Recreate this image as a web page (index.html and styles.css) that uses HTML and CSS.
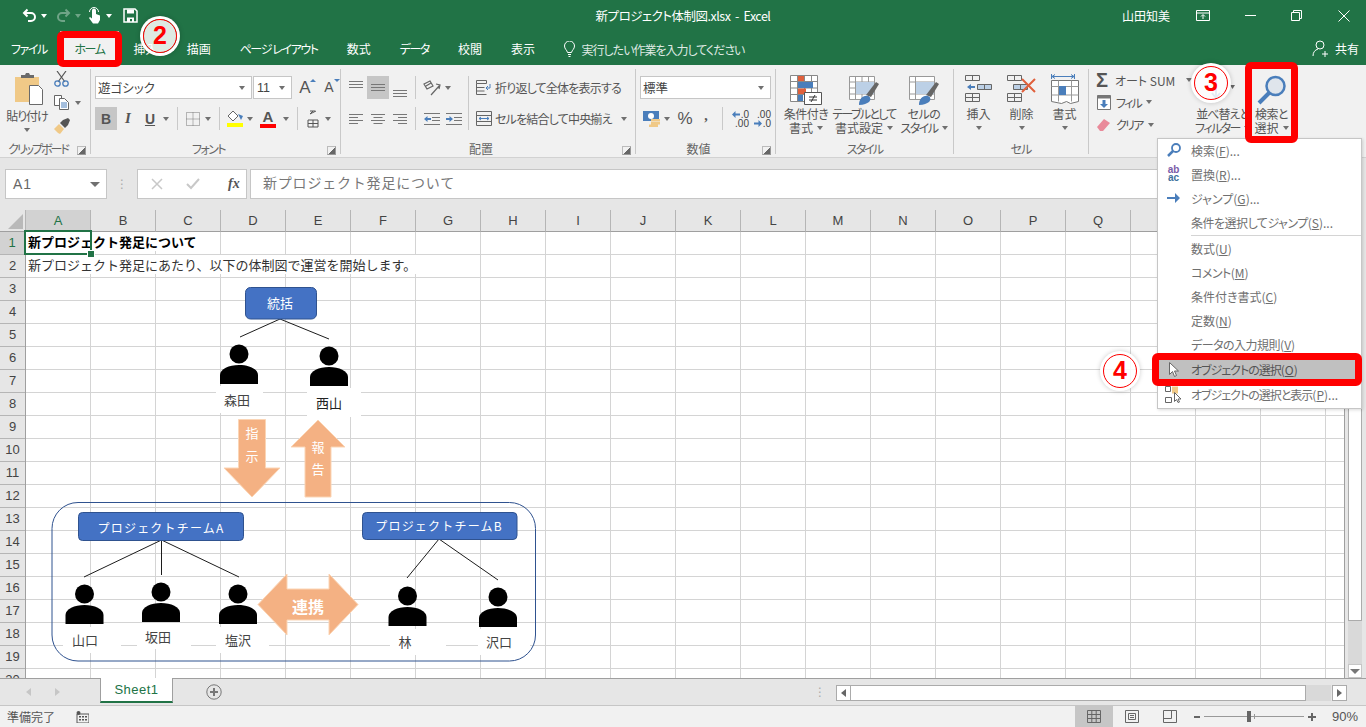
FILE: index.html
```html
<!DOCTYPE html>
<html lang="ja">
<head>
    <meta charset="UTF-8">
    <title>新プロジェクト体制図.xlsx - Excel</title>
    <link rel="stylesheet" href="styles.css">
</head>
<body>
<div class="app">

    <!-- title bar -->
    <div class="titlebar">
        <div class="qat">
            <svg width="15" height="15" viewBox="0 0 15 15"><path d="M5.5 1.5 2 5l3.5 3.5M2.5 5H9a4 4 0 0 1 0 8H6" fill="none" stroke="#fff" stroke-width="2"/></svg>
            <i class="caret white"></i>
            <svg class="dim" width="15" height="15" viewBox="0 0 15 15"><path d="M9.5 1.5 13 5 9.5 8.5M12.5 5H6a4 4 0 0 0 0 8h3" fill="none" stroke="#fff" stroke-width="2"/></svg>
            <i class="caret white dim"></i>
            <svg width="15" height="17" viewBox="0 0 15 17"><path d="M5 8V3.5a2 2 0 0 1 4 0V7l4 1.5V13l-2 3.5H6L2 11l1-1 2 1.500z" fill="#fff"/><path d="M2.5 5a4.500 4.500 0 0 1 9 0" fill="none" stroke="#fff"/></svg>
            <i class="caret white"></i>
            <svg width="15" height="15" viewBox="0 0 15 15"><path d="M1 1h11l2 2v11H1z" fill="none" stroke="#fff" stroke-width="1.5"/><path d="M4 1.500h7v4H4zM4 9.500h7V14H9v-3H7v3H4z" fill="#fff"/></svg>
        </div>
        <div class="doc-title">新プロジェクト体制図.xlsx&nbsp; - &nbsp;Excel</div>
        <div class="winbtns">
            <span class="user">山田知美</span>
            <svg class="ctl-ribbon" width="14" height="11" viewBox="0 0 14 11"><path d="M.5.5h13v10H.5zM.5 3h13M7 9V5M5 6.5l2-2 2 2" fill="none" stroke="#fff"/></svg>
            <svg class="ctl-min" width="11" height="11" viewBox="0 0 11 11"><path d="M0 5.5h11" stroke="#fff"/></svg>
            <svg class="ctl-max" width="11" height="11" viewBox="0 0 11 11"><path d="M.5 2.5h8v8h-8zM2.5 2.5v-2h8v8h-2" fill="none" stroke="#fff"/></svg>
            <svg class="ctl-close" width="12" height="12" viewBox="0 0 12 12"><path d="M.5.5l11 11M11.5.5l-11 11" stroke="#fff"/></svg>
        </div>
    </div>

    <!-- tabs -->
    <div class="tabs">
        <span class="tab kana">ファイル</span>
        <span class="tab kana active">ホーム</span>
        <span class="tab">挿入</span>
        <span class="tab">描画</span>
        <span class="tab kana">ページ レイアウト</span>
        <span class="tab">数式</span>
        <span class="tab kana">データ</span>
        <span class="tab">校閲</span>
        <span class="tab">表示</span>
        <span class="tell">
            <svg width="11" height="16" viewBox="0 0 11 16"><path d="M3.5 11.5C3 9 .5 8 .5 5a5 5 0 0 1 10 0c0 3-2.500 4-3 6.500zM4 13.5h3M4.5 15.5h2" fill="none" stroke="#fff"/></svg>
            <span class="k1">実行したい作業を入力してください</span>
        </span>
        <span class="share">
            <svg width="18" height="17" viewBox="0 0 18 17"><circle cx="8" cy="5" r="4" fill="none" stroke="#fff"/><path d="M1 16c0-4 2-6 5-7M13 11v6M10 14h6" fill="none" stroke="#fff"/></svg>
            共有
        </span>
    </div>

    <!-- ribbon -->
    <div class="ribbon">

        <div class="group g-clip">
            <div class="group-body">
                <div class="big paste">
                    <svg width="29" height="32" viewBox="0 0 29 32"><path d="M0 4h24v25H0z" fill="#f0c987"/><path d="M6 5V2h4l1-2h3l1 2h4v3z" fill="#6a6a6a"/><path d="M14.5 12.5h9l4 4v15h-13z" fill="#fff" stroke="#6a6a6a"/></svg>
                    <span class="big-label k1">貼り付け</span>
                    <span class="big-label"><i class="caret"></i></span>
                </div>
                <div class="clip-tools">
                    <svg width="15" height="16" viewBox="0 0 15 16"><path d="M3 0l8 11M12 0 4 11" stroke="#555" stroke-width="1.2"/><circle cx="3.5" cy="12.5" r="2.7" fill="none" stroke="#4a7ebb" stroke-width="1.3"/><circle cx="11.5" cy="12.5" r="2.7" fill="none" stroke="#4a7ebb" stroke-width="1.3"/></svg>
                    <div class="copy-line">
                        <svg width="15" height="15" viewBox="0 0 15 15"><path d="M.5.5h7v10h-7z" fill="#fff" stroke="#666"/><path d="M5.5 3.5h5l4 4v7h-9z" fill="#fff" stroke="#666"/><path d="M7 8h6M7 10h6M7 12h6" stroke="#4a7ebb"/></svg>
                        <i class="caret"></i>
                    </div>
                    <svg width="16" height="16" viewBox="0 0 16 16"><path d="M0 11l5-5 5 5-4 5-2-1z" fill="#f0c987"/><path d="M6 5l3-3 5-2 2 2-2 5-3 3z" fill="#555"/></svg>
                </div>
            </div>
            <div class="group-label"><span class="k2">クリップボード</span><i class="launcher"></i></div>
        </div>

        <div class="group g-font">
            <div class="group-body col">
                <div class="tool-row">
                    <div class="combo font-name">遊ゴシック<i class="caret"></i></div>
                    <div class="combo font-size">11<i class="caret"></i></div>
                    <span class="resize r-up">A<i class="tri blue-up"></i></span>
                    <span class="resize r-down">A<i class="tri blue-down"></i></span>
                </div>
                <div class="tool-row">
                    <span class="tool w22 on bold-b">B</span>
                    <span class="tool w22 ital-i">I</span>
                    <span class="tool w22 under-u">U</span>
                    <span class="tool w10"><i class="caret"></i></span>
                    <i class="vsep"></i>
                    <span class="tool w20">
                        <svg width="14" height="14" viewBox="0 0 14 14"><path d="M.5.5h13v13H.5z" fill="none" stroke="#777" stroke-dasharray="1 1"/><path d="M7 .5v13M.5 7h13" stroke="#777" stroke-dasharray="1 1"/></svg>
                    </span>
                    <span class="tool w10"><i class="caret"></i></span>
                    <i class="vsep"></i>
                    <span class="tool w20">
                        <svg width="17" height="16" viewBox="0 0 17 16"><path d="M6 0 1 5l5 5 5-5z" fill="#fff" stroke="#666"/><path d="M11 3l5 2-2 4z" fill="#4a7ebb"/><path d="M0 12h16v4H0z" fill="#ff0"/></svg>
                    </span>
                    <span class="tool w10"><i class="caret"></i></span>
                    <span class="tool w26 font-color">A</span>
                    <span class="tool w10"><i class="caret"></i></span>
                    <i class="vsep"></i>
                    <span class="tool w20">
                        <svg width="14" height="18" viewBox="0 0 14 18"><path d="M4 4l6-3M4 1h5M7 1l-3 3M2 10h10v7H2zM2 13.500h10M7 10v7" fill="none" stroke="#555"/></svg>
                    </span>
                    <span class="tool w10"><i class="caret"></i></span>
                </div>
            </div>
            <div class="group-label"><span class="k15">フォント</span><i class="launcher"></i></div>
        </div>

        <div class="group g-align">
            <div class="group-body">
                <div class="col align-left">
                    <div class="tool-row">
                        <span class="tool w22 va-top"><svg width="14" height="7" viewBox="0 0 14 7"><path d="M0 .5h14M0 3.5h14M0 6.5h14" stroke="#777"/></svg></span>
                        <span class="tool w22 on"><svg width="14" height="7" viewBox="0 0 14 7"><path d="M0 .5h14M0 3.5h14M0 6.5h14" stroke="#777"/></svg></span>
                        <span class="tool w22 va-bot"><svg width="14" height="7" viewBox="0 0 14 7"><path d="M0 .5h14M0 3.5h14M0 6.5h14" stroke="#777"/></svg></span>
                        <i class="vsep"></i>
                        <span class="tool w22">
                            <svg width="18" height="16" viewBox="0 0 18 16"><path d="M1 4l6-3 3 5-6 3zM3 6l5-3M8 15 17 5M13 4l4 1-1 4" fill="none" stroke="#666" stroke-width="1.2"/></svg>
                        </span>
                        <span class="tool w10"><i class="caret"></i></span>
                    </div>
                    <div class="tool-row">
                        <span class="tool w22"><svg width="14" height="10" viewBox="0 0 14 10"><path d="M0 .5h14M0 3.5h9M0 6.5h14M0 9.5h9" stroke="#777"/></svg></span>
                        <span class="tool w22"><svg width="14" height="10" viewBox="0 0 14 10"><path d="M0 .5h14M2.5 3.5h9M0 6.5h14M2.5 9.5h9" stroke="#777"/></svg></span>
                        <span class="tool w22"><svg width="14" height="10" viewBox="0 0 14 10"><path d="M0 .5h14M5 3.5h9M0 6.5h14M5 9.5h9" stroke="#777"/></svg></span>
                        <i class="vsep"></i>
                        <span class="tool w22"><svg width="16" height="12" viewBox="0 0 16 12"><path d="M0 .5h16M8 4.5h8M8 7.5h8M0 11.5h16" stroke="#777"/><path d="M0 6l3.5-3v2H7v2H3.5v2z" fill="#4a7ebb"/></svg></span>
                        <span class="tool w22"><svg width="16" height="12" viewBox="0 0 16 12"><path d="M0 .5h16M8 4.5h8M8 7.5h8M0 11.5h16" stroke="#777"/><path d="M7 6 3.5 3v2H0v2h3.5v2z" fill="#4a7ebb"/></svg></span>
                    </div>
                </div>
                <i class="vsep tall"></i>
                <div class="col align-right">
                    <div class="tool-row text-tool">
                        <svg width="16" height="15" viewBox="0 0 16 15"><path d="M.5.5h10v3H.5zM.5 3.5v11h10M.5 7.5h8M.5 11h8" fill="none" stroke="#666"/><path d="M10 8h4V4M10 8l2-2M10 8l2 2" fill="none" stroke="#4a7ebb"/></svg>
                        <span class="k08">折り返して全体を表示する</span>
                    </div>
                    <div class="tool-row text-tool">
                        <svg width="16" height="15" viewBox="0 0 16 15"><path d="M.5.5h15v14H.5zM.5 4.5h15M.5 10.5h15" fill="none" stroke="#666"/><path d="M3 7.5h10M3 7.5l2-1.500M3 7.5l2 1.500M13 7.5 11 6M13 7.5 11 9" fill="none" stroke="#4a7ebb"/></svg>
                        <span class="k08">セルを結合して中央揃え</span>
                        <i class="caret merge-caret"></i>
                    </div>
                </div>
            </div>
            <div class="group-label"><span>配置</span><i class="launcher"></i></div>
        </div>

        <div class="group g-num">
            <div class="group-body col">
                <div class="tool-row">
                    <div class="combo num-format">標準<i class="caret"></i></div>
                </div>
                <div class="tool-row">
                    <span class="tool w22">
                        <svg width="17" height="16" viewBox="0 0 17 16"><path d="M0 0h16v10H0z" fill="#4a7ebb"/><circle cx="8" cy="5" r="3" fill="#fff"/><path d="M8 8h9v2.5H8zM8 11h9v2.5H8zM6 13.500h9V16H6z" fill="#f0c987"/></svg>
                    </span>
                    <span class="tool w10"><i class="caret"></i></span>
                    <span class="tool w26 pct">%</span>
                    <span class="tool w16 comma">,</span>
                    <i class="vsep num-sep"></i>
                    <span class="dec">
                        <span class="dec-line"><svg width="8" height="7" viewBox="0 0 8 7"><path d="M0 3.5 3.5 0v2.500H8v2H3.5V7z" fill="#4a7ebb"/></svg>.0</span>
                        <span class="dec-line">.00</span>
                    </span>
                    <span class="dec">
                        <span class="dec-line">.00</span>
                        <span class="dec-line"><svg width="8" height="7" viewBox="0 0 8 7"><path d="M8 3.5 4.500 0v2.500H0v2h4.500V7z" fill="#4a7ebb"/></svg>.0</span>
                    </span>
                </div>
            </div>
            <div class="group-label"><span>数値</span><i class="launcher"></i></div>
        </div>

        <div class="group g-style">
            <div class="group-body">
                <div class="big b-cond">
                    <svg width="32" height="30" viewBox="0 0 32 30"><path d="M.5.5h27v26H.5zM7.5.5v26M14.5.5v26M21.5.5v26M.5 6.500h27M.5 13h27M.5 19.500h27" fill="#fff" stroke="#888"/><path d="M8 1h6v5H8zM8 13.500h8v5.500H8z" fill="#e0603c"/><path d="M8 7h15v6H8zM8 20h5v6H8z" fill="#4a7ebb"/><path d="M14.5 17.5h17v12h-17z" fill="#fff" stroke="#555"/><path d="M19 22h8M19 25h8M25 20l-4 7" stroke="#333" fill="none"/></svg>
                    <span class="big-label k05">条件付き</span>
                    <span class="big-label">書式<i class="caret"></i></span>
                </div>
                <div class="big b-table">
                    <svg width="30" height="30" viewBox="0 0 30 30"><path d="M.5 1.5h25v23H.5zM6.500 1.500v23M13 1.500v23M19.500 1.500v23M.5 7h25M.5 13h25M.5 19h25" fill="#fff" stroke="#999"/><path d="M7 7h18v12H7z" fill="#bcd0e6"/><path d="M17 20 27 7l3 2-8 13z" fill="#666"/><path d="M10 30c0-6 4-10 9-9 3 1 3 4 1 6-2 1-5 3-10 3z" fill="#4a7ebb"/></svg>
                    <span class="big-label k17">テーブルとして</span>
                    <span class="big-label">書式設定<i class="caret"></i></span>
                </div>
                <div class="big b-cell">
                    <svg width="30" height="30" viewBox="0 0 30 30"><path d="M.5 1.5h25v23H.5zM.5 7h25M.5 19h25M6.500 1.500v23" fill="#fff" stroke="#999"/><path d="M7 7h18v12H7z" fill="#bcd0e6"/><path d="M17 20 27 7l3 2-8 13z" fill="#666"/><path d="M10 30c0-6 4-10 9-9 3 1 3 4 1 6-2 1-5 3-10 3z" fill="#4a7ebb"/></svg>
                    <span class="big-label k05">セルの</span>
                    <span class="big-label"><span class="k15">スタイル</span><i class="caret"></i></span>
                </div>
            </div>
            <div class="group-label solo"><span class="k2">スタイル</span></div>
        </div>

        <div class="group g-cells">
            <div class="group-body">
                <div class="big b-cellbtn">
                    <svg width="27" height="30" viewBox="0 0 27 30"><path d="M.5.5h14v5H.5zM7.5.5v5M.5 18.500h14v8H.5zM.5 22.500h14M7.500 18.500v8" fill="none" stroke="#666"/><path d="M12.500 9.500h14v5h-14zM19.500 9.500v5" fill="#bcd0e6" stroke="#666"/><path d="M2 12l4-3v2h4v2H6v2z" fill="#4a7ebb"/></svg>
                    <span class="big-label">挿入</span>
                    <span class="big-label"><i class="caret"></i></span>
                </div>
                <div class="big b-cellbtn">
                    <svg width="29" height="30" viewBox="0 0 29 30"><path d="M.5.5h14v5H.5zM7.5.5v5M.5 18.500h14v8H.5zM.5 22.500h14M7.500 18.500v8" fill="none" stroke="#666"/><path d="M6.500 9.500h14v5h-14zM13.500 9.500v5" fill="#bcd0e6" stroke="#666"/><path d="M15 4l13 13M28 4 15 17" stroke="#e0603c" stroke-width="2"/></svg>
                    <span class="big-label">削除</span>
                    <span class="big-label"><i class="caret"></i></span>
                </div>
                <div class="big b-cellbtn">
                    <svg width="28" height="32" viewBox="0 0 28 32"><path d="M.5 0v5M23.500 0v5M1 2.500h22M1 2.500l3-2M1 2.500l3 2M23 2.500l-3-2M23 2.500l-3 2" fill="none" stroke="#4a7ebb"/><path d="M.5 6.500h27v21l-8 2-4-2-5 2-10-2z" fill="#fff" stroke="#777"/><path d="M7.500 6.500v21M20.500 6.500v21M.5 12.500h27M.5 21h27" stroke="#999"/><path d="M8 12h7v9H8z" fill="#4a7ebb"/></svg>
                    <span class="big-label">書式</span>
                    <span class="big-label"><i class="caret"></i></span>
                </div>
            </div>
            <div class="group-label solo"><span class="k1">セル</span></div>
        </div>

        <div class="group g-edit">
            <div class="group-body">
                <div class="edit-tools">
                    <div class="edit-line">
                        <span class="sigma">Σ</span><span class="sum-text">オート SUM</span><i class="caret sum-caret"></i>
                    </div>
                    <div class="edit-line">
                        <svg width="14" height="15" viewBox="0 0 14 15"><path d="M.5.5h13v14H.5z" fill="#fff" stroke="#777"/><path d="M.5.5h13v3H.5z" fill="#777"/><path d="M5.500 5h3v4H11l-4 4-4-4h2.500z" fill="#4a7ebb"/></svg>
                        <span class="k17">フィル</span><i class="caret"></i>
                    </div>
                    <div class="edit-line">
                        <svg width="14" height="13" viewBox="0 0 14 13"><path d="M0 9l7-8 6 4-7 8H3z" fill="#e98a9a"/></svg>
                        <span class="k17">クリア</span><i class="caret"></i>
                    </div>
                </div>
                <div class="big b-sort">
                    <svg width="30" height="30" viewBox="0 0 30 30"><path d="M8 4v18M4 18l4 5 4-5" fill="none" stroke="#4a7ebb" stroke-width="2"/><path d="M22 10l5 0-2.500 4z" fill="#666"/></svg>
                    <span class="big-label k1">並べ替えと</span>
                    <span class="big-label"><span class="k15">フィルター</span><i class="caret"></i></span>
                </div>
                <div class="big b-find">
                    <svg width="30" height="30" viewBox="0 0 30 30"><circle cx="18.500" cy="11" r="9" fill="#dfe5ec" stroke="#4a7ebb" stroke-width="2.500"/><path d="M12 18 2 28" stroke="#4a7ebb" stroke-width="4"/></svg>
                    <span class="big-label k05">検索と</span>
                    <span class="big-label">選択<i class="caret"></i></span>
                </div>
            </div>
        </div>
    </div>

    <!-- formula bar -->
    <div class="formula-bar">
        <div class="name-box">A1<i class="caret big-caret"></i></div>
        <span class="grip">⋮</span>
        <div class="fx-btns">
            <svg width="12" height="12" viewBox="0 0 12 12"><path d="M1 1l10 10M11 1 1 11" stroke="#c8c8c8" stroke-width="1.5"/></svg>
            <svg width="14" height="12" viewBox="0 0 14 12"><path d="M1 6l4 4 8-9" fill="none" stroke="#c8c8c8" stroke-width="2"/></svg>
            <span class="fx">fx</span>
        </div>
        <div class="formula-input">新プロジェクト発足について</div>
    </div>

    <!-- sheet -->
    <div class="sheet">
        <div class="grid">
            <div class="col-heads">
                <div class="corner"><i></i></div>
                <div class="ch sel">A</div><div class="ch">B</div><div class="ch">C</div><div class="ch">D</div><div class="ch">E</div><div class="ch">F</div><div class="ch">G</div><div class="ch">H</div><div class="ch">I</div><div class="ch">J</div><div class="ch">K</div><div class="ch">L</div><div class="ch">M</div><div class="ch">N</div><div class="ch">O</div><div class="ch">P</div><div class="ch">Q</div><div class="ch">R</div><div class="ch">S</div><div class="ch">T</div><div class="ch">U</div>
            </div>
            <div class="grid-body">
                <div class="row-heads">
                    <div class="rh sel">1</div><div class="rh">2</div><div class="rh">3</div><div class="rh">4</div><div class="rh">5</div><div class="rh">6</div><div class="rh">7</div><div class="rh">8</div><div class="rh">9</div><div class="rh">10</div><div class="rh">11</div><div class="rh">12</div><div class="rh">13</div><div class="rh">14</div><div class="rh">15</div><div class="rh">16</div><div class="rh">17</div><div class="rh">18</div><div class="rh">19</div><div class="rh">20</div>
                </div>
                <div class="cells">
                    <div class="cell-row"><span class="cell-text strong">新プロジェクト発足について</span></div>
                    <div class="cell-row"><span class="cell-text">新プロジェクト発足にあたり、以下の体制図で運営を開始します。</span></div>
                    <div class="active-cell"></div>
                </div>
            </div>
        </div>

        <!-- diagram, drawn in page coordinates -->
        <svg class="diagram" width="1345" height="468" viewBox="0 210 1345 468">
            <g class="mask">
                <rect x="216" y="386" width="47" height="27"/>
                <rect x="307" y="388" width="54" height="29"/>
                <rect x="63" y="627" width="58" height="26"/>
                <rect x="137" y="623" width="54" height="26"/>
                <rect x="216" y="627" width="53" height="26"/>
                <rect x="390" y="629" width="56" height="26"/>
                <rect x="478" y="629" width="52" height="26"/>
            </g>

            <rect class="frame" x="52" y="502.5" width="483.5" height="158.5" rx="26"/>

            <g class="wires">
                <path d="M280 319 240 337M280 319l49 20"/>
                <path d="M161.5 540 84 577M161.5 540v35M161.5 540 239 577"/>
                <path d="M439 539 407 578M439 539l59 41"/>
            </g>

            <rect class="node" x="245.5" y="287.5" width="71" height="31.5" rx="5"/>
            <rect class="node" x="78.5" y="512.5" width="165" height="28" rx="4"/>
            <rect class="node" x="362.5" y="512.5" width="154.5" height="27" rx="4"/>
            <text class="on-node" x="280" y="308">統括</text>
            <text class="on-node spaced" x="161" y="533">プロジェクトチームA</text>
            <text class="on-node spaced" x="439" y="531">プロジェクトチームB</text>

            <defs>
                <g id="person">
                    <circle cx="0" cy="0" r="9.5"/>
                    <path d="M-19 30v-9c0-6 9-10 19-10s19 4 19 10v9z"/>
                </g>
            </defs>
            <use href="#person" x="239" y="354"/>
            <use href="#person" x="329" y="356"/>
            <use href="#person" x="84.5" y="594"/>
            <use href="#person" x="161" y="592"/>
            <use href="#person" x="238" y="594"/>
            <use href="#person" x="407.5" y="596"/>
            <use href="#person" x="498" y="597"/>

            <text class="who" x="237" y="405">森田</text>
            <text class="who dark" x="329" y="408">西山</text>
            <text class="who" x="85" y="645">山口</text>
            <text class="who" x="158" y="642">坂田</text>
            <text class="who" x="238" y="645">塩沢</text>
            <text class="who" x="405" y="647">林</text>
            <text class="who" x="499" y="647">沢口</text>

            <path class="arrow" d="M238.5 419.5h27V468H280l-28 29-28-29h14.500z"/>
            <path class="arrow" d="M318 420l27 27h-14v50h-26v-50h-14z"/>
            <path class="arrow" d="M258 604.5 287 574v15h42v-15l29 30.500-29 30.500v-15h-42v15z"/>
            <text class="on-arrow" x="252" y="438">指</text>
            <text class="on-arrow" x="252" y="461">示</text>
            <text class="on-arrow" x="318" y="452">報</text>
            <text class="on-arrow" x="318" y="474">告</text>
            <text class="on-arrow link" x="308" y="613">連携</text>
        </svg>

        <div class="vscroll">
            <div class="v-thumb"></div>
            <div class="v-track"></div>
            <div class="v-down"><i class="caret big-caret"></i></div>
        </div>
    </div>

    <!-- sheet tabs -->
    <div class="tabbar">
        <span class="nav-tri left"></span>
        <span class="nav-tri right"></span>
        <div class="sheet-tab">Sheet1</div>
        <svg class="add-sheet" width="16" height="16" viewBox="0 0 16 16"><circle cx="8" cy="8" r="7.2" fill="none" stroke="#777"/><path d="M4 8h8M8 4v8" stroke="#777" stroke-width="2"/></svg>
        <span class="grip tab-grip">⋮</span>
        <div class="hscroll">
            <div class="h-btn"><i class="tri-left"></i></div>
            <div class="h-thumb"></div>
            <div class="h-track"></div>
            <div class="h-btn"><i class="tri-right"></i></div>
        </div>
    </div>

    <!-- status bar -->
    <div class="statusbar">
        <span class="ready">準備完了</span>
        <svg class="macro" width="13" height="12" viewBox="0 0 13 12"><path d="M1 3h12v9H1z" fill="none" stroke="#555"/><path d="M3 5h2v1.500H3zM6 5h2v1.500H6zM9 5h2v1.500H9zM3 8h2v1.500H3zM6 8h2v1.500H6zM9 8h2v1.500H9z" fill="#555"/><circle cx="2.5" cy="2" r="2" fill="#555"/></svg>
        <div class="views">
            <span class="view on"><svg width="14" height="13" viewBox="0 0 14 13"><path d="M.5.5h13v12H.5zM.5 4.500h13M.5 8.500h13M4.800.5v12M9.200.5v12" fill="none" stroke="#666"/></svg></span>
            <span class="view"><svg width="14" height="13" viewBox="0 0 14 13"><path d="M.5.5h13v12H.5zM3.500 3.500h7v6h-7zM5 5.500h4M5 7.500h4" fill="none" stroke="#666"/></svg></span>
            <span class="view"><svg width="14" height="13" viewBox="0 0 14 13"><path d="M.5.5h13v12H.5zM.5 8.500h8v-8" fill="none" stroke="#666"/></svg></span>
        </div>
        <div class="zoom">
            <span class="zoom-minus"></span>
            <div class="slider"><i class="knob"></i><i class="tick"></i></div>
            <span class="zoom-plus"></span>
            <span class="zoom-val">90%</span>
        </div>
    </div>

    <!-- find & select dropdown -->
    <div class="menu">
        <div class="mi"><span class="mi-icon"><svg width="14" height="14" viewBox="0 0 14 14"><circle cx="9" cy="5" r="4" fill="#fff" stroke="#4a7ebb" stroke-width="1.8"/><path d="M6 8l-5 5" stroke="#4a7ebb" stroke-width="2.5"/></svg></span>検索(<u>F</u>)...</div>
        <div class="mi"><span class="mi-icon abc"><b>ab</b><b>ac</b></span>置換(<u>R</u>)...</div>
        <div class="mi"><span class="mi-icon"><svg width="13" height="10" viewBox="0 0 13 10"><path d="M0 4h8V0l5 5-5 5V6H0z" fill="#4a7ebb"/></svg></span>ジャンプ(<u>G</u>)...</div>
        <div class="mi"><span class="mi-icon"></span><span class="k05">条件を選択してジャンプ</span>(<u>S</u>)...</div>
        <div class="mi-sep"></div>
        <div class="mi"><span class="mi-icon"></span>数式(<u>U</u>)</div>
        <div class="mi"><span class="mi-icon"></span><span class="k05">コメント</span>(<u>M</u>)</div>
        <div class="mi"><span class="mi-icon"></span>条件付き書式(<u>C</u>)</div>
        <div class="mi"><span class="mi-icon"></span>定数(<u>N</u>)</div>
        <div class="mi"><span class="mi-icon"></span><span class="k05">データの入力規則</span>(<u>V</u>)</div>
        <div class="mi hover"><span class="mi-icon"><svg width="10" height="15" viewBox="0 0 10 15"><path d="M.5.5v12l3-3 2 5 2-1-2-4.500h4z" fill="#fff" stroke="#666"/></svg></span><span class="k1">オブジェクトの選択</span>(<u>O</u>)</div>
        <div class="mi last"><span class="mi-icon"><svg width="17" height="17" viewBox="0 0 17 17"><path d="M.5 5.500h5v-5h-5zM.5 16.500h6v-5h-6z" fill="none" stroke="#666"/><path d="M7 .5h6v7H7z" fill="#f0c987"/><path d="M9.500 6.500v9l2-2 1.500 3 1.500-.5-1.500-3h3z" fill="#fff" stroke="#666"/></svg></span><span class="k1">オブジェクトの選択と表示</span>(<u>P</u>)...</div>
    </div>

    <!-- red tutorial marks -->
    <div class="mark mark-home"></div>
    <div class="mark mark-find"></div>
    <div class="mark mark-obj"></div>
    <div class="step step-2">2</div>
    <div class="step step-3">3</div>
    <div class="step step-4">4</div>
</div>
</body>
</html>
```

FILE: styles.css
```css
* {
    box-sizing: border-box;
}

body {
    margin: 0;
    overflow: hidden;
    font-family: "Noto Sans CJK JP", "Noto Sans", sans-serif;
    font-size: 12px;
    color: #555;
    background-color: #f1f1f1;
}

.app {
    position: relative;
    width: 1366px;
    height: 727px;
    overflow: hidden;
    font-feature-settings: "palt";
}

i {
    display: block;
    font-style: normal;
}

svg {
    display: block;
    flex: none;
}

/* the original UI font has narrower kana than Noto */
.k05 { letter-spacing: -0.5px; }
.k08 { letter-spacing: -0.8px; }
.k1 { letter-spacing: -1px; }
.k15 { letter-spacing: -1.5px; }
.k17 { letter-spacing: -1.7px; }
.k2 { letter-spacing: -2px; }

/* small dropdown arrow */
.caret {
    display: inline-block;
    width: 0;
    height: 0;
    border-left: 3.5px solid transparent;
    border-right: 3.5px solid transparent;
    border-top: 4px solid #707070;
    vertical-align: middle;
    flex: none;
}

.caret.white {
    border-top-color: #fff;
}

.dim {
    opacity: 0.35;
}

.big-caret {
    border-left-width: 5px;
    border-right-width: 5px;
    border-top-width: 5px;
}

/* title bar */
.titlebar {
    height: 31px;
    background-color: #217346;
    color: #fff;
    display: grid;
    grid-template-columns: 1fr auto 1fr;
    align-items: center;
}

.qat {
    display: flex;
    align-items: center;
    padding-left: 22px;
}

.qat .caret {
    margin-left: 4px;
}

.qat .caret:nth-of-type(1) { margin-right: 9px; }
.qat .caret:nth-of-type(2) { margin-right: 6px; }
.qat .caret:nth-of-type(3) { margin-right: 11px; }

.doc-title {
    letter-spacing: -0.5px;
    font-size: 12.5px;
}

.winbtns {
    display: flex;
    align-items: center;
    justify-content: flex-end;
    padding-right: 16px;
}

.user {
    margin-right: 26px;
}

.ctl-ribbon,
.ctl-min {
    margin-right: 35px;
}

.ctl-max {
    margin-right: 36px;
}

/* tabs */
.tabs {
    height: 34px;
    background-color: #217346;
    color: #fff;
    display: flex;
    align-items: center;
}

.tab {
    height: 34px;
    line-height: 36px;
    padding: 0 14.5px;
    white-space: nowrap;
}

.tab.kana {
    letter-spacing: -1.4px;
}

.tab:first-child {
    padding: 0 13px 0 11px;
}

.tab.active {
    color: #217346;
    background-color: #f1f1f1;
}

.tell {
    display: flex;
    align-items: center;
    gap: 7px;
    margin-left: 14px;
    color: #dfe9e3;
    padding-top: 2px;
}

.share {
    display: flex;
    align-items: center;
    gap: 5px;
    margin-left: auto;
    padding-right: 7px;
}

/* ribbon */
.ribbon {
    height: 93px;
    background-color: #f1f1f1;
    border-bottom: 1px solid #d2d2d2;
    display: flex;
    padding-top: 4px;
}

.group {
    height: 85px;
    display: flex;
    flex-direction: column;
    border-right: 1px solid #c9c9c9;
    flex: none;
}

.g-clip { width: 91px; }
.g-font { width: 250px; }
.g-align { width: 295px; }
.g-num { width: 140px; }
.g-style { width: 178px; }
.g-cells { width: 135px; }

.g-edit {
    flex: 1;
    border-right: none;
}

.group-body {
    height: 67px;
    display: flex;
}

.group-label {
    height: 18px;
    line-height: 26px;
    display: flex;
    color: #666;
    white-space: nowrap;
}

.group-label span {
    flex: 1;
    text-align: center;
}

.launcher {
    width: 9px;
    height: 9px;
    margin: 10px 4px 0 1px;
    border: 1px solid #999;
    border-top-color: #bbb;
    border-left-color: #bbb;
    background: linear-gradient(135deg, transparent 55%, #666 55%);
}

.col {
    display: flex;
    flex-direction: column;
    gap: 8px;
    padding-top: 7px;
}

.g-font .col,
.g-num .col {
    padding-left: 4px;
}

.tool-row {
    height: 23px;
    display: flex;
    align-items: center;
}

.tool {
    height: 23px;
    display: flex;
    align-items: center;
    justify-content: center;
    flex: none;
    color: #555;
}

.tool.on {
    background-color: #c6c6c6;
}

.w10 { width: 10px; }
.w16 { width: 16px; }
.w20 { width: 20px; }
.w22 { width: 22px; }
.w26 { width: 26px; }

.vsep {
    width: 1px;
    height: 23px;
    background-color: #c9c9c9;
    margin: 0 5px 0 6px;
    flex: none;
}

.num-sep {
    margin: 0 6px 0 8px;
}

.combo {
    height: 23px;
    background-color: #fff;
    border: 1px solid #c6c6c6;
    display: flex;
    align-items: center;
    justify-content: space-between;
    padding: 0 6px 0 2px;
    color: #444;
    font-size: 12.5px;
}

.font-name { width: 157px; }

.font-size {
    width: 39px;
    margin-left: 1px;
    padding-left: 3px;
    font-family: "Liberation Sans", sans-serif;
}

.num-format { width: 131px; }

.resize {
    position: relative;
    font-family: "Liberation Sans", sans-serif;
    width: 16px;
    text-align: center;
    font-size: 17px;
    line-height: 23px;
    color: #555;
}

.r-up { margin-left: 5px; }

.r-down {
    margin-left: 8px;
    font-size: 14px;
}

.tri {
    position: absolute;
    right: -3px;
    top: 3px;
    width: 0;
    height: 0;
    border-left: 3px solid transparent;
    border-right: 3px solid transparent;
}

.blue-up { border-bottom: 3px solid #4a7ebb; }
.blue-down { border-top: 3px solid #4a7ebb; }

.bold-b,
.under-u {
    font-family: "Liberation Sans", sans-serif;
    font-size: 14px;
    font-weight: bold;
}

.ital-i {
    font-style: italic;
    font-family: "Liberation Serif", serif;
    font-size: 15px;
    font-weight: bold;
}

.under-u {
    text-decoration: underline;
}

.font-color {
    font-family: "Liberation Sans", sans-serif;
    font-size: 15px;
    font-weight: bold;
    line-height: 15px;
    background: linear-gradient(#f00, #f00) center 17px / 16px 4px no-repeat;
    padding-bottom: 5px;
}

.pct {
    font-family: "Liberation Sans", sans-serif;
    font-size: 17px;
}

.comma {
    font-family: "Liberation Serif", serif;
    font-size: 14px;
    font-weight: bold;
    padding-bottom: 6px;
}

.dec {
    width: 20px;
    margin-right: 2px;
    flex: none;
    font-family: "Liberation Sans", sans-serif;
    font-size: 10px;
    line-height: 9px;
    color: #444;
    display: flex;
    flex-direction: column;
    justify-content: center;
    align-items: flex-end;
}

.dec-line {
    display: flex;
    align-items: center;
    gap: 1px;
}

.va-top {
    align-items: flex-start;
    padding-top: 5px;
}

.va-bot {
    align-items: flex-end;
    padding-bottom: 2px;
}

.g-align .col {
    flex: none;
}

.g-align .vsep {
    margin: 0 5px 0 4px;
}

.align-left {
    width: 127px;
    padding-left: 4px;
}

.g-align .vsep.tall {
    height: 54px;
    margin: 7px 0 0 0;
}

.align-right {
    padding-left: 7px;
}

.text-tool {
    gap: 3px;
    white-space: nowrap;
}

.merge-caret {
    margin-left: 6px;
}

/* big buttons */
.big {
    display: flex;
    flex-direction: column;
    align-items: center;
    padding-top: 4px;
    flex: none;
}

.big svg {
    height: 34px;
}

.big-label {
    height: 14px;
    line-height: 14px;
    display: flex;
    align-items: center;
    gap: 4px;
    white-space: nowrap;
    color: #555;
}

.paste {
    width: 54px;
    padding-top: 3px;
}

.paste svg {
    margin: 0 0 3px 4px;
}

.clip-tools {
    display: flex;
    flex-direction: column;
    gap: 8px;
    padding-top: 2px;
    width: 30px;
}

.copy-line {
    display: flex;
    align-items: center;
    gap: 6px;
}

.g-style .group-body {
    padding-left: 4px;
}

.b-cond { width: 52px; }
.b-table { width: 64px; }
.b-cell { width: 56px; }

.g-cells .group-body {
    padding-left: 3px;
}

.b-cellbtn { width: 43px; }

.edit-tools {
    width: 104px;
    display: flex;
    flex-direction: column;
    padding-left: 8px;
}

.edit-line {
    height: 23px;
    display: flex;
    align-items: center;
    gap: 5px;
    white-space: nowrap;
}

.sigma {
    width: 16px;
    margin-left: -1px;
    font-family: "Liberation Sans", sans-serif;
    font-size: 20px;
    font-weight: bold;
    color: #555;
    line-height: 20px;
}

.sum-text {
    margin-left: -2px;
}

.sum-caret {
    margin-left: 6px;
}

.b-sort { width: 59px; }
.b-find { width: 39px; }

/* formula bar */
.formula-bar {
    height: 52px;
    background-color: #e6e6e6;
    display: flex;
    align-items: flex-start;
    padding: 11px 0 0 5px;
}

.name-box {
    width: 102px;
    height: 30px;
    background-color: #fff;
    border: 1px solid #c6c6c6;
    display: flex;
    align-items: center;
    justify-content: space-between;
    padding: 0 6px 0 7px;
    font-family: "Liberation Sans", sans-serif;
    font-size: 14px;
    letter-spacing: 1px;
    color: #666;
}

.grip {
    width: 30px;
    text-align: center;
    line-height: 30px;
    color: #aaa;
    font-family: "DejaVu Sans", sans-serif;
}

.fx-btns {
    width: 110px;
    height: 30px;
    background-color: #fff;
    border: 1px solid #c6c6c6;
    display: flex;
    align-items: center;
    padding-left: 13px;
    gap: 23px;
}

.fx {
    font-family: "Liberation Serif", serif;
    font-style: italic;
    font-weight: bold;
    font-size: 14px;
    margin-left: 5px;
}

.formula-input {
    width: 1110px;
    height: 30px;
    margin-left: 3px;
    background-color: #fff;
    border: 1px solid #c6c6c6;
    padding-left: 12px;
    line-height: 25px;
    font-size: 14px;
    letter-spacing: 0.8px;
    color: #777;
    font-feature-settings: normal;
}

/* sheet */
.sheet {
    position: relative;
    height: 468px;
    display: flex;
    overflow: hidden;
    background-color: #e6e6e6;
}

.grid {
    width: 1345px;
    overflow: hidden;
    background-color: #fff;
    border-right: 1px solid #9f9f9f;
    font-feature-settings: normal;
}

.col-heads {
    display: flex;
    height: 22px;
    background-color: #e6e6e6;
}

.corner {
    width: 26px;
    flex: none;
    border-right: 1px solid #b5b5b5;
    border-bottom: 1px solid #9f9f9f;
    position: relative;
}

.corner i {
    position: absolute;
    right: 2px;
    bottom: 2px;
    width: 0;
    height: 0;
    border-left: 15px solid transparent;
    border-bottom: 15px solid #b9b9b9;
}

.ch {
    width: 65px;
    flex: none;
    text-align: center;
    line-height: 21px;
    font-family: "Liberation Sans", sans-serif;
    font-size: 13px;
    color: #444;
    border-right: 1px solid #b5b5b5;
    border-bottom: 1px solid #9f9f9f;
}

.ch.sel {
    background-color: #d2d2d2;
    color: #217346;
    border-bottom: 2px solid #217346;
}

.grid-body {
    display: flex;
}

.row-heads {
    width: 26px;
    flex: none;
    background-color: #e6e6e6;
    border-right: 1px solid #9f9f9f;
}

.rh {
    height: 23px;
    line-height: 21px;
    text-align: center;
    font-family: "Liberation Sans", sans-serif;
    font-size: 13px;
    color: #444;
    border-bottom: 1px solid #b5b5b5;
}

.rh.sel {
    background-color: #d2d2d2;
    color: #217346;
    border-right: 2px solid #217346;
    margin-right: -1px;
}

.cells {
    position: relative;
    flex: 1;
    height: 460px;
    background-image:
        linear-gradient(to right, transparent 64px, #d4d4d4 64px),
        linear-gradient(to bottom, transparent 22px, #d4d4d4 22px);
    background-size: 65px 100%, 100% 23px;
}

.cell-row {
    height: 22px;
    margin-bottom: 1px;
    line-height: 20px;
    padding-left: 2px;
    white-space: nowrap;
}

.cell-text {
    font-size: 13px;
    color: #333;
    background-color: #fff;
    padding-right: 1px;
}

.cell-text.strong {
    font-weight: bold;
    color: #000;
}

.active-cell {
    position: absolute;
    left: -2px;
    top: -2px;
    width: 68px;
    height: 25px;
    border: 2px solid #217346;
}

.active-cell::after {
    content: "";
    position: absolute;
    right: -5px;
    bottom: -5px;
    width: 6px;
    height: 6px;
    background-color: #217346;
    border: 1px solid #fff;
}

.diagram {
    position: absolute;
    left: 0;
    top: 0;
    font-family: "Noto Sans CJK JP", sans-serif;
    font-feature-settings: normal;
}

.mask rect {
    fill: #fff;
}

.frame {
    fill: none;
    stroke: #2f528f;
    stroke-width: 1;
}

.wires path {
    fill: none;
    stroke: #1c1c1c;
    stroke-width: 1;
}

.node {
    fill: #4472c4;
    stroke: #2f528f;
    stroke-width: 1;
}

.on-node {
    fill: #fff;
    font-size: 13px;
    text-anchor: middle;
}

.on-node.spaced {
    font-size: 12px;
    letter-spacing: 1.2px;
}

.who {
    font-size: 13px;
    fill: #444;
    text-anchor: middle;
}

.who.dark {
    fill: #222;
}

.arrow {
    fill: #f4b183;
    stroke: #fbd5b5;
    stroke-width: 1;
}

.on-arrow {
    fill: #fff;
    font-size: 13px;
    text-anchor: middle;
}

.on-arrow.link {
    font-size: 16px;
    font-weight: bold;
}

.vscroll {
    width: 21px;
    flex: none;
    background-color: #e6e6e6;
    padding: 0 4px 0 3px;
    display: flex;
    flex-direction: column;
}

.v-thumb {
    height: 411px;
    background-color: #fff;
    border: 1px solid #ababab;
}

.v-track {
    flex: 1;
    background-color: #d9d9d9;
}

.v-down {
    height: 14px;
    background-color: #fff;
    border: 1px solid #c6c6c6;
    display: flex;
    align-items: center;
    justify-content: center;
}

.v-down .caret {
    border-top-color: #777;
}

/* sheet tabs */
.tabbar {
    height: 28px;
    background-color: #e6e6e6;
    border-top: 1px solid #9f9f9f;
    border-bottom: 1px solid #c6c6c6;
    display: flex;
    align-items: flex-start;
}

.nav-tri {
    width: 0;
    height: 0;
    margin-top: 9px;
    border-top: 4px solid transparent;
    border-bottom: 4px solid transparent;
}

.nav-tri.left {
    margin-left: 26px;
    border-right: 5px solid #c6c6c6;
}

.nav-tri.right {
    margin-left: 24px;
    border-left: 5px solid #c6c6c6;
}

.sheet-tab {
    width: 73px;
    height: 25px;
    margin: -1px 0 0 40px;
    background-color: #fff;
    border-left: 1px solid #9f9f9f;
    border-right: 1px solid #9f9f9f;
    border-bottom: 2px solid #217346;
    text-align: center;
    line-height: 24px;
    color: #217346;
    font-family: "Liberation Sans", sans-serif;
    font-size: 13px;
    letter-spacing: 0.5px;
}

.add-sheet {
    margin: 5px 0 0 33px;
}

.tab-grip {
    width: 30px;
    margin-left: 583px;
    line-height: 26px;
}

.hscroll {
    height: 16px;
    margin: 6px 0 0 1px;
    display: flex;
    width: 511px;
}

.h-btn {
    width: 15px;
    flex: none;
    background-color: #fff;
    border: 1px solid #ababab;
    display: flex;
    align-items: center;
    justify-content: center;
}

.tri-left,
.tri-right {
    width: 0;
    height: 0;
    border-top: 4px solid transparent;
    border-bottom: 4px solid transparent;
}

.tri-left { border-right: 5px solid #666; }
.tri-right { border-left: 5px solid #666; }

.h-thumb {
    width: 455px;
    flex: none;
    background-color: #fff;
    border: 1px solid #ababab;
    border-left: none;
}

.h-track {
    width: 25px;
    flex: none;
    background-color: #d9d9d9;
    margin-right: 1px;
}

/* status bar */
.statusbar {
    height: 21px;
    background-color: #f1f1f1;
    display: flex;
    align-items: center;
    padding-left: 7px;
    color: #555;
}

.macro {
    margin-left: 21px;
}

.views {
    display: flex;
    margin-left: 986px;
}

.view {
    width: 38px;
    height: 21px;
    display: flex;
    align-items: center;
    justify-content: center;
}

.view.on {
    background-color: #c6c6c6;
}

.zoom {
    display: flex;
    align-items: center;
    margin-left: 5px;
}

.zoom-minus {
    width: 6px;
    height: 2px;
    background-color: #666;
}

.slider {
    position: relative;
    width: 100px;
    height: 1px;
    margin: 0 4px;
    background-color: #999;
}

.knob {
    position: absolute;
    left: 43px;
    top: -5px;
    width: 4px;
    height: 11px;
    background-color: #666;
}

.tick {
    position: absolute;
    left: 50px;
    top: -2px;
    width: 1px;
    height: 5px;
    background-color: #999;
}

.zoom-plus {
    width: 8px;
    height: 8px;
    background:
        linear-gradient(#666, #666) center / 8px 2px no-repeat,
        linear-gradient(#666, #666) center / 2px 8px no-repeat;
}

.zoom-val {
    margin-left: 16px;
    font-family: "Liberation Sans", sans-serif;
    font-size: 13px;
}

/* dropdown */
.menu {
    position: absolute;
    left: 1157px;
    top: 138px;
    width: 205px;
    height: 271px;
    background-color: #fff;
    border: 1px solid #c6c6c6;
    box-shadow: 1px 1px 3px rgba(0, 0, 0, 0.15);
    color: #6f6f6f;
}

.mi {
    height: 24px;
    padding-bottom: 2px;
    display: flex;
    align-items: center;
    white-space: nowrap;
}

.mi-icon {
    width: 33px;
    flex: none;
    display: flex;
    justify-content: center;
    padding-right: 2px;
}

.mi.hover {
    background-color: #c0c0c0;
    color: #555;
    margin-top: 1px;
}

.mi.last {
    margin-top: 1px;
}

.mi-sep {
    height: 1px;
    margin: 0 0 1px 33px;
    background-color: #d4d4d4;
}

.abc {
    flex-direction: column;
    align-items: center;
    font-family: "Liberation Sans", sans-serif;
    font-size: 10px;
    line-height: 8px;
}

.abc b {
    color: #7a5ba8;
}

.abc b + b {
    color: #41719c;
}

/* tutorial marks */
.mark {
    position: absolute;
    border: 7px solid #f00;
    border-radius: 6px;
}

.mark-home {
    left: 57px;
    top: 31px;
    width: 65px;
    height: 36px;
}

.mark-find {
    left: 1245px;
    top: 62px;
    width: 53px;
    height: 81px;
}

.mark-obj {
    left: 1152px;
    top: 353px;
    width: 210px;
    height: 33px;
}

.step {
    position: absolute;
    width: 34px;
    height: 34px;
    border: 1.5px solid #f00;
    border-radius: 50%;
    background-color: rgba(255, 255, 255, 0.85);
    box-shadow: 0 0 0 3px #fff, 0 0 5px 3px rgba(0, 0, 0, 0.2);
    color: #f00;
    font-family: "Liberation Sans", sans-serif;
    font-weight: bold;
    font-size: 25px;
    line-height: 31px;
    text-align: center;
}

.step-2 {
    left: 143px;
    top: 19px;
}

.step-3 {
    left: 1194px;
    top: 66px;
}

.step-4 {
    left: 1103px;
    top: 354px;
}
```
